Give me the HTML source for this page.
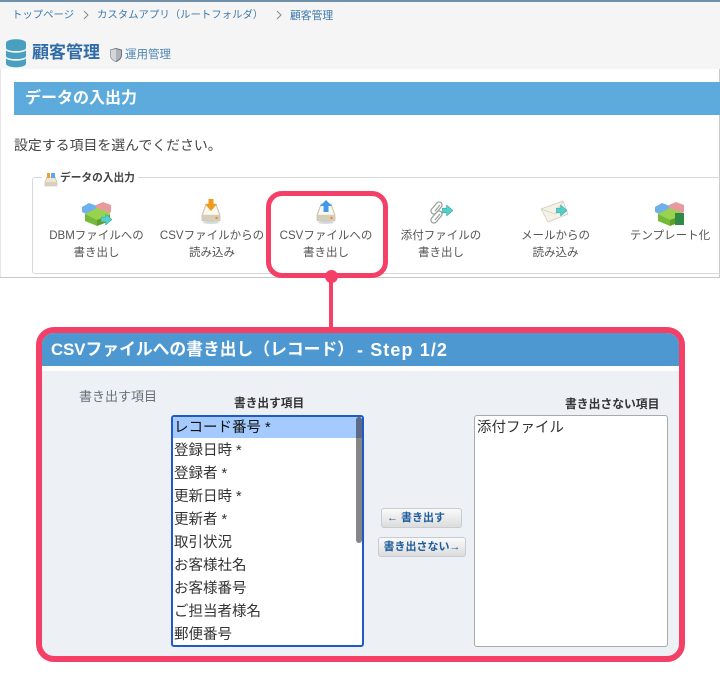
<!DOCTYPE html>
<html lang="ja"><head><meta charset="utf-8"><title>CSV</title>
<style>
html,body{margin:0;padding:0;background:#fff}
body{position:relative;width:720px;height:685px;overflow:hidden;font-family:"Liberation Sans","Noto Sans CJK JP",sans-serif}
.a{position:absolute;box-sizing:border-box}
.t{position:absolute;white-space:nowrap;line-height:20px;height:20px;margin-top:1px}
.c{transform:translateX(-50%);color:#555;font-size:11.500px}
.b{color:#3f78ab;font-size:10.400px}
svg{position:absolute;overflow:visible}
svg.i{filter:blur(.35px)}
.r{position:absolute;left:174px;font-size:14.500px;color:#333;line-height:23px;height:23px;white-space:nowrap;margin-top:1px}
.btn{position:absolute;box-sizing:border-box;height:20px;border:1px solid #c5ccd2;border-radius:3px;background:linear-gradient(#fafafa,#dcdcdc);color:#1d5c9e;font-size:11px;font-weight:bold;line-height:19px;white-space:nowrap}
</style></head><body>
<svg width="0" height="0" style="position:absolute"><defs>
<symbol id="tray" viewBox="0 0 20 24"><ellipse cx="10" cy="22.500" rx="8" ry="1.500" fill="#d5dbe0"/><path d="M5 4h10l4 11v5a1 1 0 0 1-1 1H2a1 1 0 0 1-1-1v-5z" fill="#ece6d6" stroke="#b3ac98" stroke-width=".6"/><path d="M5.500 5h9l3 9.500H2.500z" fill="#faf8f0"/><rect x="1.300" y="15" width="17.400" height="5.800" fill="#d6ceb8"/><circle cx="15.500" cy="18" r="1.200" fill="#ee8a2a"/></symbol>
<symbol id="blocks" viewBox="0 0 30 24"><path d="M0 5l7-4 8 3v6l-7 4-8-4z" fill="#6fb0ea"/><path d="M14 3l7-3 8 3v7l-7 4-8-3z" fill="#e89a9f"/><path d="M3 12l12-6 13 5v3l-13 5-12-4z" fill="#98d24f"/><path d="M15 18l13-5v6l-13 5z" fill="#5d9f27"/><path d="M3 12l12 6v6L3 19z" fill="#74ba38"/></symbol>
<symbol id="arr" viewBox="0 0 12 12"><path d="M0 3.500h5V0l7 6-7 6V8.500H0z" fill="#55cfc9" stroke="#3aa7a8" stroke-width=".6"/></symbol>
</defs></svg>

<div class="a" style="left:0;top:0;width:720px;height:69px;background:#f5f5f5"></div>
<div class="a" style="left:0;top:0;width:720px;height:1.500px;background:#6f90a8"></div>
<div class="a" style="left:0;top:69px;width:1px;height:208px;background:#e6e6e6"></div>
<div class="a" style="left:718.500px;top:69px;width:1px;height:208px;background:#ccc"></div>
<div class="a" style="left:0;top:276.500px;width:720px;height:1px;background:#c8c8c8"></div>

<div class="t b" style="left:12px;top:4.500px">トップページ</div>
<svg style="left:83px;top:10px" width="6" height="10"><path d="M1 1l4 4-4 4" fill="none" stroke="#7f8c96"/></svg>
<div class="t b" style="left:97px;top:4.500px">カスタムアプリ（ルートフォルダ）</div>
<svg style="left:276px;top:10px" width="6" height="10"><path d="M1 1l4 4-4 4" fill="none" stroke="#7f8c96"/></svg>
<div class="t b" style="left:290px;top:4.500px;font-size:10.800px">顧客管理</div>

<svg class="i" style="left:6px;top:39px" width="20" height="29" viewBox="0 0 20 29"><g fill="#4a9fc0"><path d="M0 4c0-5 20-5 20 0v5c0 4-20 4-20 0z"/><path d="M0 11.500c4 3 16 3 20 0v5.500c0 4-20 4-20 0z"/><path d="M0 19.500c4 3 16 3 20 0v5c0 5-20 5-20 0z"/></g></svg>
<div class="t" style="left:32px;top:42px;font-size:17px;font-weight:bold;color:#2f6ba8">顧客管理</div>
<svg class="i" style="left:110px;top:48px" width="12" height="14" viewBox="0 0 12 14"><path d="M6 .5l5.500 1.500v5c0 3-2.500 5.500-5.500 6.500C3 12.500.5 10 .5 7V2z" fill="#aeb4ba" stroke="#6d7378"/><path d="M6 1v12.500C3 12.500.5 10 .5 7V2z" fill="#d4d7da"/></svg>
<div class="t" style="left:125px;top:44px;font-size:11.500px;color:#4f86b4">運用管理</div>

<div class="a" style="left:14px;top:82px;width:706px;height:33px;background:#5dabdc"></div>
<div class="t" style="left:25px;top:88px;font-size:16px;font-weight:bold;color:#fff">データの入出力</div>
<div class="t" style="left:14px;top:134px;font-size:13.900px;color:#444">設定する項目を選んでください。</div>

<div class="a" style="left:32px;top:177px;width:690px;height:97px;border:1px solid #d8d8d8;border-radius:3px"></div>
<div class="a" style="left:42px;top:172px;width:96px;height:10px;background:#fff"></div>
<svg class="i" style="left:44px;top:172px" width="14" height="15" viewBox="0 0 14 15"><path d="M3 5h8l2 5v4H1v-4z" fill="#ece6d6" stroke="#b9b29e" stroke-width=".6"/><path d="M3 1h3v5H3z" fill="#f0a030"/><path d="M7 1h4v5H7z" fill="#5fa8e8"/><rect x="1" y="10" width="12" height="4" fill="#d8d0bb"/></svg>
<div class="t" style="left:60px;top:167px;font-size:10.700px;font-weight:bold;color:#444">データの入出力</div>

<svg class="i" style="left:82px;top:202px" width="30" height="24"><use href="#blocks"/></svg>
<svg class="i" style="left:101px;top:214px" width="11" height="11"><use href="#arr"/></svg>

<svg class="i" style="left:201px;top:200px" width="20" height="24"><use href="#tray"/></svg>
<svg class="i" style="left:205px;top:199px" width="12" height="12" viewBox="0 0 12 12"><path d="M3.500 0h5v5H12l-6 7-6-7h3.500z" fill="#f09a1c"/></svg>

<svg class="i" style="left:316px;top:200px" width="20" height="24"><use href="#tray"/></svg>
<svg class="i" style="left:320px;top:200px" width="12" height="12" viewBox="0 0 12 12"><path d="M6 0l6 6H8.500v6h-5V6H0z" fill="#3f9be8"/></svg>

<svg class="i" style="left:430px;top:202px" width="16" height="22" viewBox="0 0 16 22" fill="none" stroke="#989e98" stroke-width="1.200"><rect x="3.500" y="-1" width="6" height="14" rx="3" transform="rotate(40 6.500 6)"/><path d="M5 9l5-6"/><rect x="3.500" y="8" width="6" height="14" rx="3" transform="rotate(40 6.500 15)"/><path d="M5 18l5-6"/></svg>
<svg class="i" style="left:442px;top:205px" width="11" height="11"><use href="#arr"/></svg>

<svg class="i" style="left:541px;top:201px" width="28" height="22" viewBox="0 0 28 22"><path d="M0 8L22 0l5 13-20 8z" fill="#f4f2e6" stroke="#cfcbb8" stroke-width=".7"/><path d="M0 8l14 5L22 0" fill="none" stroke="#d8d4c2" stroke-width=".8"/></svg>
<svg class="i" style="left:556px;top:205px" width="11" height="11"><use href="#arr"/></svg>

<svg class="i" style="left:655px;top:202px" width="30" height="24"><use href="#blocks"/></svg>
<div class="a" style="left:675px;top:213px;width:9px;height:12px;background:#2f8a4a"></div>

<div class="t c" style="left:96.500px;top:225px">DBMファイルへの</div>
<div class="t c" style="left:96.500px;top:242px">書き出し</div>
<div class="t c" style="left:212px;top:225px">CSVファイルからの</div>
<div class="t c" style="left:212px;top:242px">読み込み</div>
<div class="t c" style="left:326px;top:225px">CSVファイルへの</div>
<div class="t c" style="left:326px;top:242px">書き出し</div>
<div class="t c" style="left:441px;top:225px">添付ファイルの</div>
<div class="t c" style="left:441px;top:242px">書き出し</div>
<div class="t c" style="left:555.500px;top:225px">メールからの</div>
<div class="t c" style="left:555.500px;top:242px">読み込み</div>
<div class="t c" style="left:670px;top:225px">テンプレート化</div>

<div class="a" style="left:266px;top:191px;width:122px;height:87px;border:5px solid #f43f67;border-radius:16px"></div>
<div class="a" style="left:329px;top:275px;width:4px;height:54px;background:#f43f67"></div>
<div class="a" style="left:324.500px;top:269.500px;width:13px;height:13px;border-radius:50%;background:#f43f67"></div>

<div class="a" style="left:36px;top:327px;width:649px;height:335px;border:6px solid #f43f67;border-radius:18px;background:#edf1f6;overflow:hidden">
<div class="a" style="left:0;top:0;width:637px;height:33px;background:#4d98d1"></div>
<div class="a" style="left:0;top:33px;width:637px;height:5px;background:#fff"></div>
</div>
<div class="t" style="left:51px;top:338.500px;font-size:16.800px;font-weight:bold;color:#fff">CSVファイルへの書き出し（レコード）</div>
<div class="t" style="left:357px;top:338.500px;font-size:18px;font-weight:bold;color:#fff;letter-spacing:1.100px;white-space:pre">- Step 1/2</div>
<div class="t" style="left:79px;top:386px;font-size:13px;color:#667078">書き出す項目</div>
<div class="t" style="left:234px;top:393px;font-size:11.700px;font-weight:bold;color:#333">書き出す項目</div>
<div class="t" style="left:565px;top:393px;font-size:11.800px;font-weight:bold;color:#333">書き出さない項目</div>

<div class="a" style="left:171px;top:415px;width:193px;height:232px;background:#fff;border:2px solid #1f5bc8;border-radius:3px"></div>
<div class="a" style="left:173px;top:417px;width:189px;height:21px;background:#a5cbfe"></div>
<div class="a" style="left:356px;top:417px;width:6px;height:126px;background:#868686;border-radius:3px"></div>
<div class="a" style="left:356px;top:417px;width:6px;height:21px;background:#5b6a85;border-radius:3px 3px 0 0"></div>
<div class="r" style="top:416px;color:#111">レコード番号 *</div>
<div class="r" style="top:439px">登録日時 *</div>
<div class="r" style="top:462px">登録者 *</div>
<div class="r" style="top:485px">更新日時 *</div>
<div class="r" style="top:508px">更新者 *</div>
<div class="r" style="top:531px">取引状況</div>
<div class="r" style="top:554px">お客様社名</div>
<div class="r" style="top:577px">お客様番号</div>
<div class="r" style="top:600px">ご担当者様名</div>
<div class="r" style="top:623px">郵便番号</div>

<div class="btn" style="left:381px;top:508px;width:81px;padding-left:5px">←&nbsp;書き出す</div>
<div class="btn" style="left:377.500px;top:537px;width:88px;padding-left:5px">書き出さない→</div>

<div class="a" style="left:474px;top:415px;width:194px;height:232px;background:#fff;border:1.500px solid #a9a9a9;border-radius:3px"></div>
<div class="r" style="left:477px;top:416px">添付ファイル</div>
</body></html>
